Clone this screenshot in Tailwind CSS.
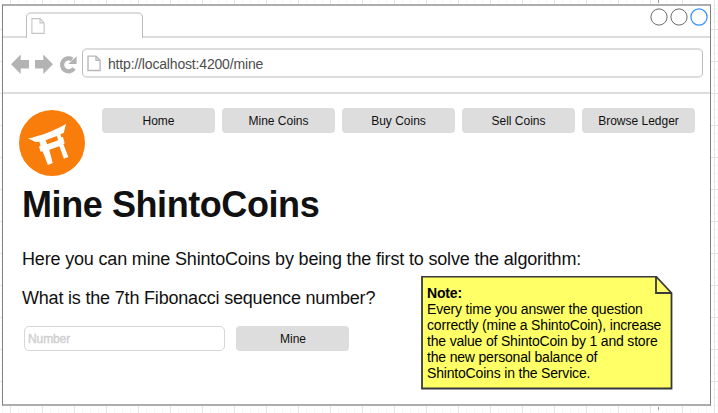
<!DOCTYPE html>
<html lang="en">
<head>
<meta charset="utf-8">
<title>Mine ShintoCoins</title>
<script src="https://cdn.jsdelivr.net/npm/@tailwindcss/browser@4"></script>
</head>
<body class="relative h-[413px] w-[718px] overflow-hidden bg-white pt-[4px] pl-[2px] font-['Liberation_Sans',Arial,sans-serif] text-[#111]">
<!-- canvas grid -->
<svg class="absolute inset-0 -z-10" width="718" height="413">
  <defs>
    <pattern id="grid" x="10" y="29" width="32" height="32" patternUnits="userSpaceOnUse">
      <path d="M8.5 0V32M16.5 0V32M24.5 0V32M0 8.5H32M0 16.5H32M0 24.5H32" stroke="#f7f7f7" fill="none"/>
      <path d="M.5 0V32M0 .5H32" stroke="#e4e4e4" fill="none"/>
    </pattern>
  </defs>
  <rect width="718" height="413" fill="url(#grid)"/>
  <path d="M658.5 0v3M658.5 407v3" stroke="#999"/>
</svg>
<main class="flex h-[402px] w-[709px] flex-col border-x border-y-2 border-x-[#808080] border-y-[#adadad] bg-white">
  <!-- tab strip -->
  <div class="flex h-[32px] shrink-0">
    <div class="w-[23px] shrink-0 border-b-2 border-[#dcdcdc]"></div>
    <div class="mt-[6px] w-[117px] shrink-0 rounded-t-[5px] border-x border-t-2 border-x-[#bdbdbd] border-t-[#dcdcdc] pt-[4px] pl-[4px]">
      <svg width="14" height="17" viewBox="0 0 14 17" fill="none" stroke="#c4c4c4" stroke-width="1.1"><path d="M.9 .6H9L13.1 4.9V15.4H.9ZM9 .6V4.9H13.1"/></svg>
    </div>
    <div class="flex grow justify-end gap-[2px] border-b-2 border-[#dcdcdc] pt-[2px] pr-[2.5px]">
      <svg width="18" height="18" fill="none" stroke="#6b6b6b"><circle cx="9" cy="9" r="8.1"/></svg>
      <svg width="18" height="18" fill="none" stroke="#6b6b6b"><circle cx="9" cy="9" r="8.1"/></svg>
      <svg width="18" height="18" fill="none" stroke="#3291fc" stroke-width="1.2"><circle cx="9" cy="9" r="8.1"/></svg>
    </div>
  </div>
  <!-- toolbar -->
  <div class="flex h-[56px] shrink-0 border-b-2 border-[#dcdcdc] pt-[10px] pl-[8px]">
    <svg class="mt-[6px] mr-[4px] shrink-0" width="67" height="20" viewBox="11 54 67 20" fill="#b3b3b3">
      <path d="M11 64.3L20.7 54.6V60H29V68.6H20.7V74Z"/>
      <path d="M53 64.3L43.3 54.6V60H35V68.6H43.3V74Z"/>
      <path d="M74 68.4A6.5 6.5 0 1 1 72.2 59.4" fill="none" stroke="#b3b3b3" stroke-width="4.3"/>
      <path d="M76.6 56.2V63.9H68.2Z"/>
    </svg>
    <div class="flex h-[30px] w-[621px] items-center rounded-[5px] border-x border-y-2 border-x-[#bdbdbd] border-y-[#dcdcdc] pl-[4px]">
      <svg width="14" height="17" viewBox="0 0 14 17" fill="none" stroke="#b8b8b8" stroke-width="1.4"><path d="M1 1.1H9L13.1 5.2V15.5H1ZM9 1.1V5.2H13.1"/></svg>
      <span class="mt-[2px] ml-[7px] text-[14px] leading-[16px] tracking-[-0.17px] whitespace-nowrap text-[#4d4d4d]">http://localhost:4200/mine</span>
    </div>
  </div>
  <!-- page -->
  <div class="pl-[16px]">
    <header class="flex pt-[14px]">
      <svg class="mt-[1.5px] mr-[17px] shrink-0" width="66" height="66" viewBox="0 0 66 66">
        <circle cx="33" cy="33" r="33" fill="#f97d0b"/>
        <path d="M9.2 28.4C21 26 35 21 47 14L44.8 22.7L41.4 24.2L42.4 27.6L44 27L45.6 33.2L44.4 34.2L49.4 47L44.9 48.8L40.4 36.2L30.3 39.8L33.7 53L28.9 55L23.6 41.2L21.6 41.8L20 36.5L21.6 35.8L20.4 31.7L16.7 32Z" fill="#fff"/>
        <path d="M26.6 30.2L37.9 26.1L39.2 30.2L28.2 34.2Z" fill="#f97d0b"/>
      </svg>
      <nav class="flex gap-[7px] text-center text-[12px] leading-[27px] whitespace-nowrap">
        <a class="h-[25px] w-[113px] rounded-[4px] bg-[#ddd]">Home</a>
        <a class="h-[25px] w-[113px] rounded-[4px] bg-[#ddd]">Mine Coins</a>
        <a class="h-[25px] w-[113px] rounded-[4px] bg-[#ddd]">Buy Coins</a>
        <a class="h-[25px] w-[113px] rounded-[4px] bg-[#ddd]">Sell Coins</a>
        <a class="h-[25px] w-[113px] rounded-[4px] bg-[#ddd]">Browse Ledger</a>
      </nav>
    </header>
    <h1 class="mt-[9.5px] pl-[3px] text-[36px] leading-[40px] font-bold tracking-[-0.42px] whitespace-nowrap">Mine ShintoCoins</h1>
    <p class="mt-[24px] pl-[3px] text-[18px] leading-[20px] tracking-[-0.17px] whitespace-nowrap">Here you can mine ShintoCoins by being the first to solve the algorithm:</p>
    <div class="mt-[7px] flex">
      <section class="w-[402px] shrink-0 pt-[12px]">
        <p class="pl-[3px] text-[18px] leading-[20px] tracking-[-0.19px] whitespace-nowrap">What is the 7th Fibonacci sequence number?</p>
        <form class="mt-[18px] flex gap-[11px] pl-[5px] text-[12px]">
          <div class="h-[25px] w-[201px] rounded-[5px] border border-[#d6d6d6] pl-[3px] leading-[24px] tracking-[-0.1px] text-[#cfcfcf] [-webkit-text-stroke:0.4px_#cfcfcf]">Number</div>
          <div class="h-[25px] w-[113px] rounded-[4px] bg-[#ddd] pl-[1px] text-center leading-[26px]">Mine</div>
        </form>
      </section>
      <aside class="relative h-[114px] w-[252px] shrink-0 pt-[9px] pl-[6px] text-[14px] leading-[16px] tracking-[-0.18px] whitespace-nowrap text-black">
        <svg class="absolute inset-0" width="252" height="114" stroke="#36393d" stroke-width="1.8" fill="#ffff66"><path d="M1 .5H235L250.5 17V112.5H1Z"/><path d="M235 .5V17H250.5" fill="none"/></svg>
        <div class="relative"><b>Note:</b><br>Every time you answer the question<br>correctly (mine a ShintoCoin), increase<br>the value of ShintoCoin by 1 and store<br>the new personal balance of<br>ShintoCoins in the Service.</div>
      </aside>
    </div>
  </div>
</main>
</body>
</html>
